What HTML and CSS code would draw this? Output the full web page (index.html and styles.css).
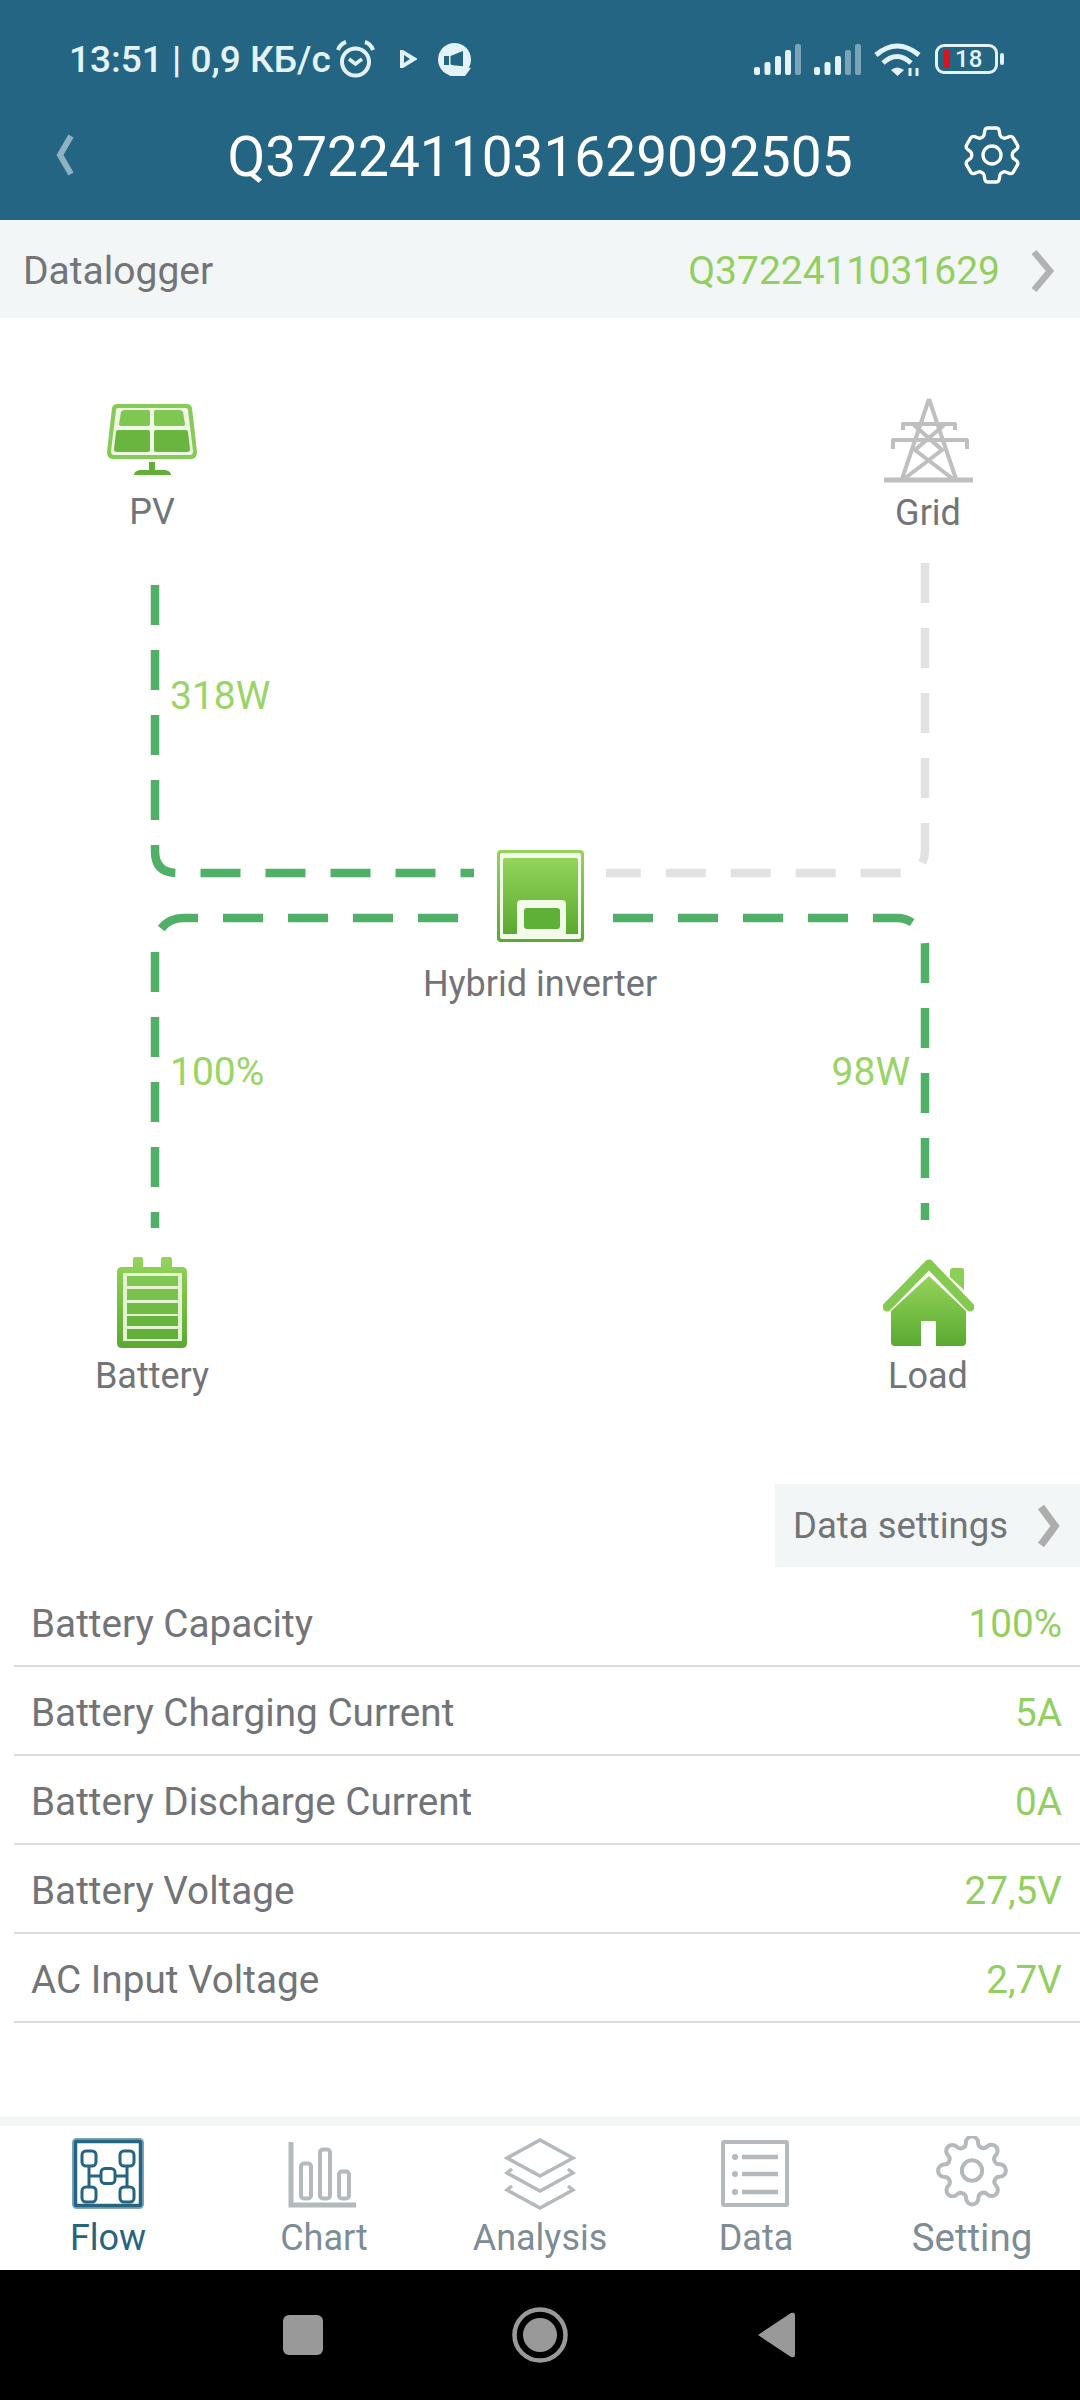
FILE: index.html
```html
<!DOCTYPE html>
<html lang="en">
<head>
    <meta charset="UTF-8">
    <meta name="viewport" content="width=device-width, initial-scale=1.0">
    <title>Q3722411031629092505</title>
    <link rel="stylesheet" href="styles.css">
</head>
<body>
    <header class="top">
        <div class="status">
            <span class="status-text">13:51 | 0,9 КБ/с</span>
            <svg class="ic-alarm" width="39" height="38" viewBox="0 0 39 38" fill="none" stroke="#e4f3fa">
                <circle cx="19.500" cy="22" r="13.500" stroke-width="4"/>
                <path d="M13 19l6.500 5 6.500-5" stroke-width="3.500"/>
                <path d="M2 10Q4 4 10 2M37 10Q35 4 29 2" stroke-width="4"/>
            </svg>
            <svg class="ic-play" width="18" height="20" viewBox="0 0 18 20" fill="#e4f3fa">
                <path d="M1 1h3l14 8.500v1L4 19H1zM5 6v8l6-4z"/>
            </svg>
            <svg class="ic-speaker" width="33" height="33" viewBox="0 0 33 33">
                <circle cx="16.500" cy="16.500" r="16.500" fill="#e4f3fa"/>
                <path d="M6 13h5v9H6zM12.500 13L25 8v17l-12.500-3.500zM27 14v5" fill="#236582"/>
                <path d="M6 25q10-5 27 0l-6 8H12z" fill="#e4f3fa"/>
            </svg>
            <span class="status-gap"></span>
            <svg class="ic-signal" width="47" height="31" viewBox="0 0 47 31" fill="#e4f3fa">
                <rect x="0" y="23" width="6" height="8" rx="2"/>
                <rect x="10.500" y="18" width="6" height="13" rx="2"/>
                <rect x="21" y="12" width="6" height="19" rx="2"/>
                <rect x="31" y="6" width="6" height="25" rx="2"/>
                <rect x="41" y="0" width="6" height="31" rx="2" opacity=".45"/>
            </svg>
            <svg class="ic-signal" width="47" height="31" viewBox="0 0 47 31" fill="#e4f3fa">
                <rect x="0" y="23" width="6" height="8" rx="2"/>
                <rect x="10.500" y="18" width="6" height="13" rx="2"/>
                <rect x="21" y="12" width="6" height="19" rx="2"/>
                <rect x="31" y="6" width="6" height="25" rx="2" opacity=".45"/>
                <rect x="41" y="0" width="6" height="31" rx="2" opacity=".45"/>
            </svg>
            <svg class="ic-wifi" width="47" height="35" viewBox="0 0 47 35" fill="none" stroke="#e4f3fa">
                <path d="M2 13Q23-5 45 13" stroke-width="5"/>
                <path d="M9 21Q23 8 37 21" stroke-width="5"/>
                <path d="M17 28Q23 23 30 28L23.500 34z" fill="#e4f3fa" stroke="none"/>
                <path d="M36 34v-8M43 34v-8" stroke-width="3"/>
            </svg>
            <div class="batt"><span class="batt-red"></span><span class="batt-num">18</span></div>
            <span class="batt-cap"></span>
        </div>
        <div class="appbar">
            <svg class="back" width="20" height="42" viewBox="0 0 20 42" fill="none" stroke="#8fb2c2" stroke-width="6">
                <path d="M16 2L5 21l11 19"/>
            </svg>
            <h1 class="title">Q3722411031629092505</h1>
            <svg class="gear" width="72" height="72" viewBox="0 0 24 24" fill="none" stroke="#fff" stroke-width="1.100">
                <path d="M9.594 3.940c.09-.542.56-.94 1.110-.94h2.593c.55 0 1.020.398 1.110.94l.213 1.281c.063.374.313.686.645.87.074.04.147.083.22.127.325.196.72.257 1.075.124l1.217-.456a1.125 1.125 0 0 1 1.370.49l1.296 2.247a1.125 1.125 0 0 1-.26 1.431l-1.003.827c-.293.241-.438.613-.43.992a7.723 7.723 0 0 1 0 .255c-.008.378.137.75.43.991l1.004.827c.424.35.534.955.26 1.430l-1.298 2.247a1.125 1.125 0 0 1-1.369.491l-1.217-.456c-.355-.133-.75-.072-1.076.124a6.470 6.470 0 0 1-.22.128c-.331.183-.581.495-.644.869l-.213 1.281c-.09.543-.56.94-1.110.94h-2.594c-.55 0-1.019-.398-1.110-.94l-.213-1.281c-.062-.374-.312-.686-.644-.87a6.520 6.520 0 0 1-.22-.127c-.325-.196-.72-.257-1.076-.124l-1.217.456a1.125 1.125 0 0 1-1.369-.49l-1.297-2.247a1.125 1.125 0 0 1 .26-1.431l1.004-.827c.292-.24.437-.613.43-.991a6.932 6.932 0 0 1 0-.255c.007-.38-.138-.751-.43-.992l-1.004-.827a1.125 1.125 0 0 1-.26-1.430l1.297-2.247a1.125 1.125 0 0 1 1.370-.491l1.216.456c.356.133.751.072 1.076-.124.072-.044.146-.086.22-.128.332-.183.582-.495.644-.869l.214-1.280Z"/>
                <circle cx="12" cy="12" r="3"/>
            </svg>
        </div>
    </header>

    <div class="logger">
        <span class="logger-label">Datalogger</span>
        <span class="logger-value">Q3722411031629</span>
        <svg class="chev" width="24" height="44" viewBox="0 0 24 44" fill="none" stroke="#b2b2b2" stroke-width="6.500">
            <path d="M4 3l16 19L4 41"/>
        </svg>
    </div>

    <main class="main">
        <section class="diagram">
            <svg class="wires" width="1080" height="1166" viewBox="0 318 1080 1166" fill="none" stroke-width="8.500" stroke-dasharray="40 25">
                <defs>
                    <linearGradient id="leaf" x1="0" y1="0" x2="0" y2="1">
                        <stop offset="0" stop-color="#95d45a"/>
                        <stop offset="1" stop-color="#5aa931"/>
                    </linearGradient>
                </defs>
                <path class="wire-on" d="M155 585V851Q155 873 177 873H474"/>
                <path class="wire-off" d="M925 563V849Q925 873 901 873H606"/>
                <path class="wire-on" d="M458 918H183A28 28 0 0 0 155 946V1228"/>
                <path class="wire-on" d="M613 918H897A28 28 0 0 1 925 946V1220"/>
            </svg>

            <div class="node node-pv">
                <svg width="90" height="71" viewBox="0 0 90 71">
                    <path d="M10 0H80Q84 0 85 4L90 48Q90 55 84 55H6Q0 55 0 48L5 4Q6 0 10 0Z" fill="#86cb57"/>
                    <path d="M11 4H79Q81 4 81 6L86 47Q86 51 83 51H7Q4 51 4 47L9 6Q9 4 11 4Z" fill="#eef8e3"/>
                    <path d="M18 6H41Q43 6 43 8V20Q43 22 41 22H14Q12 22 12 20L14 8Q15 6 18 6Z" fill="#80c652"/>
                    <path d="M49 6H72Q75 6 76 8L78 20Q78 22 76 22H49Q47 22 47 20V8Q47 6 49 6Z" fill="#80c652"/>
                    <path d="M11 26H41Q43 26 43 28V46Q43 48 41 48H10Q7 48 7 45L9 28Q9 26 11 26Z" fill="#69b53f"/>
                    <path d="M49 26H79Q81 26 81 28L83 45Q83 48 80 48H49Q47 48 47 46V28Q47 26 49 26Z" fill="#69b53f"/>
                    <path d="M42 58H48V66H58Q64 67 64 71H27Q27 67 33 66H42Z" fill="#62ae37"/>
                </svg>
                <span class="node-label node-label-pv">PV</span>
            </div>

            <div class="node node-grid">
                <svg width="89" height="86" viewBox="0 0 89 86" fill="none" stroke="#bfbfbf" stroke-width="4">
                    <path d="M45 2L18 82M45 2L72 82"/>
                    <path d="M0 83H89" stroke-width="5"/>
                    <path d="M19 33V27H71V33M9 52V43H83V52" stroke-linejoin="round"/>
                    <path d="M30 28L58 53L20 82M60 28L31 53L69 82"/>
                </svg>
                <span class="node-label node-label-grid">Grid</span>
            </div>

            <div class="node node-inverter">
                <svg width="87" height="92" viewBox="0 0 87 92">
                    <rect width="87" height="92" rx="4" fill="url(#leaf)"/>
                    <rect x="3" y="3" width="81" height="86" rx="2" fill="#f2fae9"/>
                    <path d="M8 8H79Q81 8 81 10V84H69V54Q69 50 65 50H24Q20 50 20 54V84H6V10Q6 8 8 8Z" fill="url(#leaf)"/>
                    <rect x="27" y="58" width="36" height="21" rx="3" fill="#5fb036"/>
                </svg>
                <span class="node-label node-label-inverter">Hybrid inverter</span>
            </div>

            <div class="node node-battery">
                <svg width="70" height="91" viewBox="0 0 70 91">
                    <path d="M16 2Q16 0 18 0H24Q26 0 26 2V10H44V2Q44 0 46 0H53Q55 0 55 2V10H65Q70 10 70 15V86Q70 91 65 91H5Q0 91 0 86V15Q0 10 5 10H16Z" fill="url(#leaf)"/>
                    <rect x="6" y="16" width="59" height="68" fill="#e4f4d2"/>
                    <rect x="10" y="19" width="51" height="10" fill="#80c652"/>
                    <rect x="10" y="32" width="51" height="11" fill="#79c14c"/>
                    <rect x="10" y="46" width="51" height="11" fill="#70ba45"/>
                    <rect x="10" y="59" width="51" height="10" fill="#68b43e"/>
                    <rect x="10" y="72" width="51" height="10" fill="#61ae38"/>
                </svg>
                <span class="node-label node-label-battery">Battery</span>
            </div>

            <div class="node node-load">
                <svg width="91" height="87" viewBox="0 0 91 87">
                    <path d="M67 12Q67 9 70 9H79Q81 9 81 12V31L67 18Z" fill="#8ccf57"/>
                    <path d="M4 48L46 5L87 48" fill="none" stroke="#84ca50" stroke-width="9" stroke-linecap="round" stroke-linejoin="round"/>
                    <path d="M46 17L83 52V83Q83 87 79 87H53V62H38V87H12Q8 87 8 83V52Z" fill="url(#leaf)"/>
                </svg>
                <span class="node-label node-label-load">Load</span>
            </div>

            <span class="reading reading-pv">318W</span>
            <span class="reading reading-battery">100%</span>
            <span class="reading reading-load">98W</span>
        </section>

        <div class="settings-row">
            <button class="settings-btn">
                <span>Data settings</span>
                <svg width="24" height="44" viewBox="0 0 24 44" fill="none" stroke="#adadad" stroke-width="7.500">
                    <path d="M5 3l14 19L5 41"/>
                </svg>
            </button>
        </div>

        <ul class="list">
            <li class="row"><span>Battery Capacity</span><span class="val">100%</span></li>
            <li class="row"><span>Battery Charging Current</span><span class="val">5A</span></li>
            <li class="row"><span>Battery Discharge Current</span><span class="val">0A</span></li>
            <li class="row"><span>Battery Voltage</span><span class="val">27,5V</span></li>
            <li class="row"><span>AC Input Voltage</span><span class="val">2,7V</span></li>
        </ul>
    </main>

    <nav class="tabs">
        <div class="tab tab-active">
            <svg width="72" height="74" viewBox="0 0 72 74" fill="none" stroke="#266580" stroke-width="3">
                <rect x="2.500" y="4.500" width="67" height="66" rx="2" stroke="#7fa6b8" stroke-width="5"/>
                <rect x="3.500" y="5.500" width="65" height="64" rx="1" stroke-width="3.500"/>
                <rect x="10" y="15" width="14" height="15" rx="4"/>
                <rect x="48" y="15" width="14" height="15" rx="4"/>
                <rect x="10" y="51" width="14" height="15" rx="4"/>
                <rect x="48" y="51" width="14" height="15" rx="4"/>
                <rect x="29" y="32.500" width="14" height="15" rx="4"/>
                <path d="M17 30V51M55 30V51M17 40H29M43 40H55"/>
            </svg>
            <span>Flow</span>
        </div>
        <div class="tab">
            <svg width="72" height="74" viewBox="0 0 72 74" fill="none" stroke="#b3b9bc" stroke-width="4">
                <path d="M3 6V69H68" stroke-width="5"/>
                <rect x="13" y="27.500" width="10" height="35" rx="3"/>
                <rect x="32" y="13.500" width="10" height="49" rx="3"/>
                <rect x="51" y="35.500" width="10" height="27" rx="3"/>
            </svg>
            <span>Chart</span>
        </div>
        <div class="tab">
            <svg width="72" height="74" viewBox="0 0 72 74" fill="none" stroke="#b3b9bc" stroke-width="3.500">
                <path d="M3 22L36 4L69 22L36 40Z"/>
                <path d="M8 33L3 37L36 55L69 37L64 33"/>
                <path d="M8 50L3 54L36 72L69 54L64 50"/>
            </svg>
            <span>Analysis</span>
        </div>
        <div class="tab">
            <svg width="72" height="74" viewBox="0 0 72 74" fill="none" stroke="#b3b9bc" stroke-width="4">
                <rect x="3" y="6" width="64" height="63" rx="1"/>
                <path d="M22 21H58M22 38H58M22 56H58" stroke-width="4.500"/>
                <circle cx="15" cy="21" r="3" fill="#b3b9bc" stroke="none"/>
                <circle cx="15" cy="38" r="3" fill="#b3b9bc" stroke="none"/>
                <circle cx="15" cy="56" r="3" fill="#b3b9bc" stroke="none"/>
            </svg>
            <span>Data</span>
        </div>
        <div class="tab tab-setting">
            <svg width="74" height="74" viewBox="0 0.8 24 24" fill="none" stroke="#b3b9bc" stroke-width="1.300">
                <circle cx="12" cy="12" r="3.300"/>
                <path d="M19.400 15a1.650 1.650 0 0 0 .33 1.820l.06.06a2 2 0 0 1 0 2.830 2 2 0 0 1-2.830 0l-.06-.06a1.650 1.650 0 0 0-1.820-.33 1.650 1.650 0 0 0-1 1.510V21a2 2 0 0 1-2 2 2 2 0 0 1-2-2v-.09A1.650 1.650 0 0 0 9 19.400a1.650 1.650 0 0 0-1.820.33l-.06.06a2 2 0 0 1-2.830 0 2 2 0 0 1 0-2.830l.06-.06a1.650 1.650 0 0 0 .33-1.820 1.650 1.650 0 0 0-1.510-1H3a2 2 0 0 1-2-2 2 2 0 0 1 2-2h.09A1.650 1.650 0 0 0 4.600 9a1.650 1.650 0 0 0-.33-1.820l-.06-.06a2 2 0 0 1 0-2.830 2 2 0 0 1 2.830 0l.06.06a1.650 1.650 0 0 0 1.820.33H9a1.650 1.650 0 0 0 1-1.510V3a2 2 0 0 1 2-2 2 2 0 0 1 2 2v.09a1.650 1.650 0 0 0 1 1.510 1.650 1.650 0 0 0 1.820-.33l.06-.06a2 2 0 0 1 2.830 0 2 2 0 0 1 0 2.830l-.06.06a1.650 1.650 0 0 0-.33 1.820V9a1.650 1.650 0 0 0 1.510 1H21a2 2 0 0 1 2 2 2 2 0 0 1-2 2h-.09a1.650 1.650 0 0 0-1.510 1z"/>
            </svg>
            <span>Setting</span>
        </div>
    </nav>

    <footer class="sysnav">
        <span class="sys-square"></span>
        <svg width="56" height="56" viewBox="0 0 56 56">
            <circle cx="28" cy="28" r="25.500" fill="none" stroke="#999" stroke-width="4.500"/>
            <circle cx="28" cy="28" r="17" fill="#999"/>
        </svg>
        <svg width="38" height="46" viewBox="0 0 38 46">
            <path d="M1 23L34 1Q38 0 38 3V43Q38 46 34 45Z" fill="#999"/>
        </svg>
    </footer>
</body>
</html>
```

FILE: styles.css
```css
* {
    box-sizing: border-box;
}
body {
    margin: 0;
    width: 1080px;
    height: 2400px;
    display: flex;
    flex-direction: column;
    background-color: #fff;
    font-family: Roboto, "Noto Sans", sans-serif;
    color: #727477;
    overflow: hidden;
}

/* header */
.top {
    height: 220px;
    background-color: #236582;
    color: #fff;
}
.status {
    height: 100px;
    padding: 18px 76px 0 69px;
    display: flex;
    align-items: center;
}
.status-text {
    font-size: 37px;
    font-weight: 500;
    color: #e4f3fa;
    white-space: nowrap;
}
.ic-alarm {
    margin-left: 5px;
}
.ic-play {
    margin-left: 24px;
}
.ic-speaker {
    margin-left: 21px;
}
.status-gap {
    flex: 1;
}
.ic-signal {
    margin-right: 13px;
}
.ic-wifi {
    margin-right: 14px;
}
.batt {
    width: 63px;
    height: 30px;
    border: 3px solid #e4f3fa;
    border-radius: 9px;
    display: flex;
    align-items: center;
    padding-left: 5px;
    gap: 5px;
}
.batt-red {
    width: 7px;
    height: 18px;
    background-color: #d8141c;
    border-radius: 2px;
}
.batt-num {
    font-size: 24px;
    font-weight: 500;
    color: #e4f3fa;
}
.batt-cap {
    width: 4px;
    height: 12px;
    margin-left: 2px;
    border-radius: 2px;
    background-color: #e4f3fa;
}
.appbar {
    height: 120px;
    padding: 0 52px 10px 52px;
    display: grid;
    grid-template-columns: 72px 1fr 72px;
    align-items: center;
}
.back {
    margin-left: 3px;
}
.title {
    margin: 4px 0 0;
    text-align: center;
    font-size: 55px;
    font-weight: 400;
    color: #fff;
}

/* datalogger */
.logger {
    height: 98px;
    padding: 3px 26px 0 23px;
    display: flex;
    align-items: center;
    background-color: #f3f6f7;
}
.logger-label {
    flex: 1;
    font-size: 39px;
}
.logger-value {
    font-size: 39px;
    color: #92cf60;
    margin-right: 30px;
}

/* diagram */
.main {
    flex: 1;
    display: flex;
    flex-direction: column;
}
.diagram {
    position: relative;
    height: 1166px;
}
.wires {
    position: absolute;
    left: 0;
    top: 0;
}
.wire-on {
    stroke: #50b068;
}
.wire-off {
    stroke: #e2e2e2;
}
.node {
    position: absolute;
    width: 300px;
    display: flex;
    flex-direction: column;
    align-items: center;
}
.node-pv {
    left: 2px;
    top: 86px;
}
.node-grid {
    left: 778px;
    top: 79px;
}
.node-inverter {
    left: 390px;
    top: 532px;
}
.node-battery {
    left: 2px;
    top: 939px;
}
.node-load {
    left: 778px;
    top: 941px;
}
.node-label {
    font-size: 36px;
    line-height: 42px;
}
.node-label-pv {
    margin-top: 16px;
}
.node-label-grid {
    margin-top: 9px;
}
.node-label-inverter {
    margin-top: 21px;
}
.node-label-battery {
    margin-top: 7px;
}
.node-label-load {
    margin-top: 9px;
}
.reading {
    position: absolute;
    font-size: 39px;
    line-height: 44px;
    color: #9ad466;
}
.reading-pv {
    left: 170px;
    top: 356px;
}
.reading-battery {
    left: 170px;
    top: 732px;
}
.reading-load {
    right: 170px;
    top: 732px;
}

/* data list */
.settings-row {
    display: flex;
    justify-content: flex-end;
}
.settings-btn {
    width: 305px;
    height: 83px;
    padding: 0 20px 0 18px;
    border: none;
    display: flex;
    align-items: center;
    justify-content: space-between;
    background-color: #f3f6f7;
    font-family: inherit;
    font-size: 36.500px;
    color: #727477;
}
.list {
    list-style: none;
    margin: 11px 0 0 14px;
    padding: 0;
}
.row {
    height: 89px;
    padding: 3px 18px 0 17px;
    display: flex;
    align-items: center;
    justify-content: space-between;
    border-bottom: 2px solid #dcdcdc;
    font-size: 38.700px;
}
.val {
    color: #92cf60;
}

/* bottom tabs */
.tabs {
    height: 153px;
    border-top: 9px solid #f3f6f7;
    display: grid;
    grid-template-columns: repeat(5, 1fr);
    background-color: #fff;
}
.tab {
    padding-top: 10px;
    display: flex;
    flex-direction: column;
    align-items: center;
    font-size: 36px;
    color: #7e8c96;
}
.tab span {
    margin-top: 7px;
    line-height: 42px;
}
.tab-active {
    color: #266580;
}
.tab-setting span {
    font-size: 38.500px;
}

/* android nav */
.sysnav {
    height: 130px;
    padding: 0 285px 0 283px;
    display: flex;
    align-items: center;
    justify-content: space-between;
    background-color: #000;
}
.sys-square {
    width: 40px;
    height: 40px;
    border-radius: 6px;
    background-color: #999;
}
```
